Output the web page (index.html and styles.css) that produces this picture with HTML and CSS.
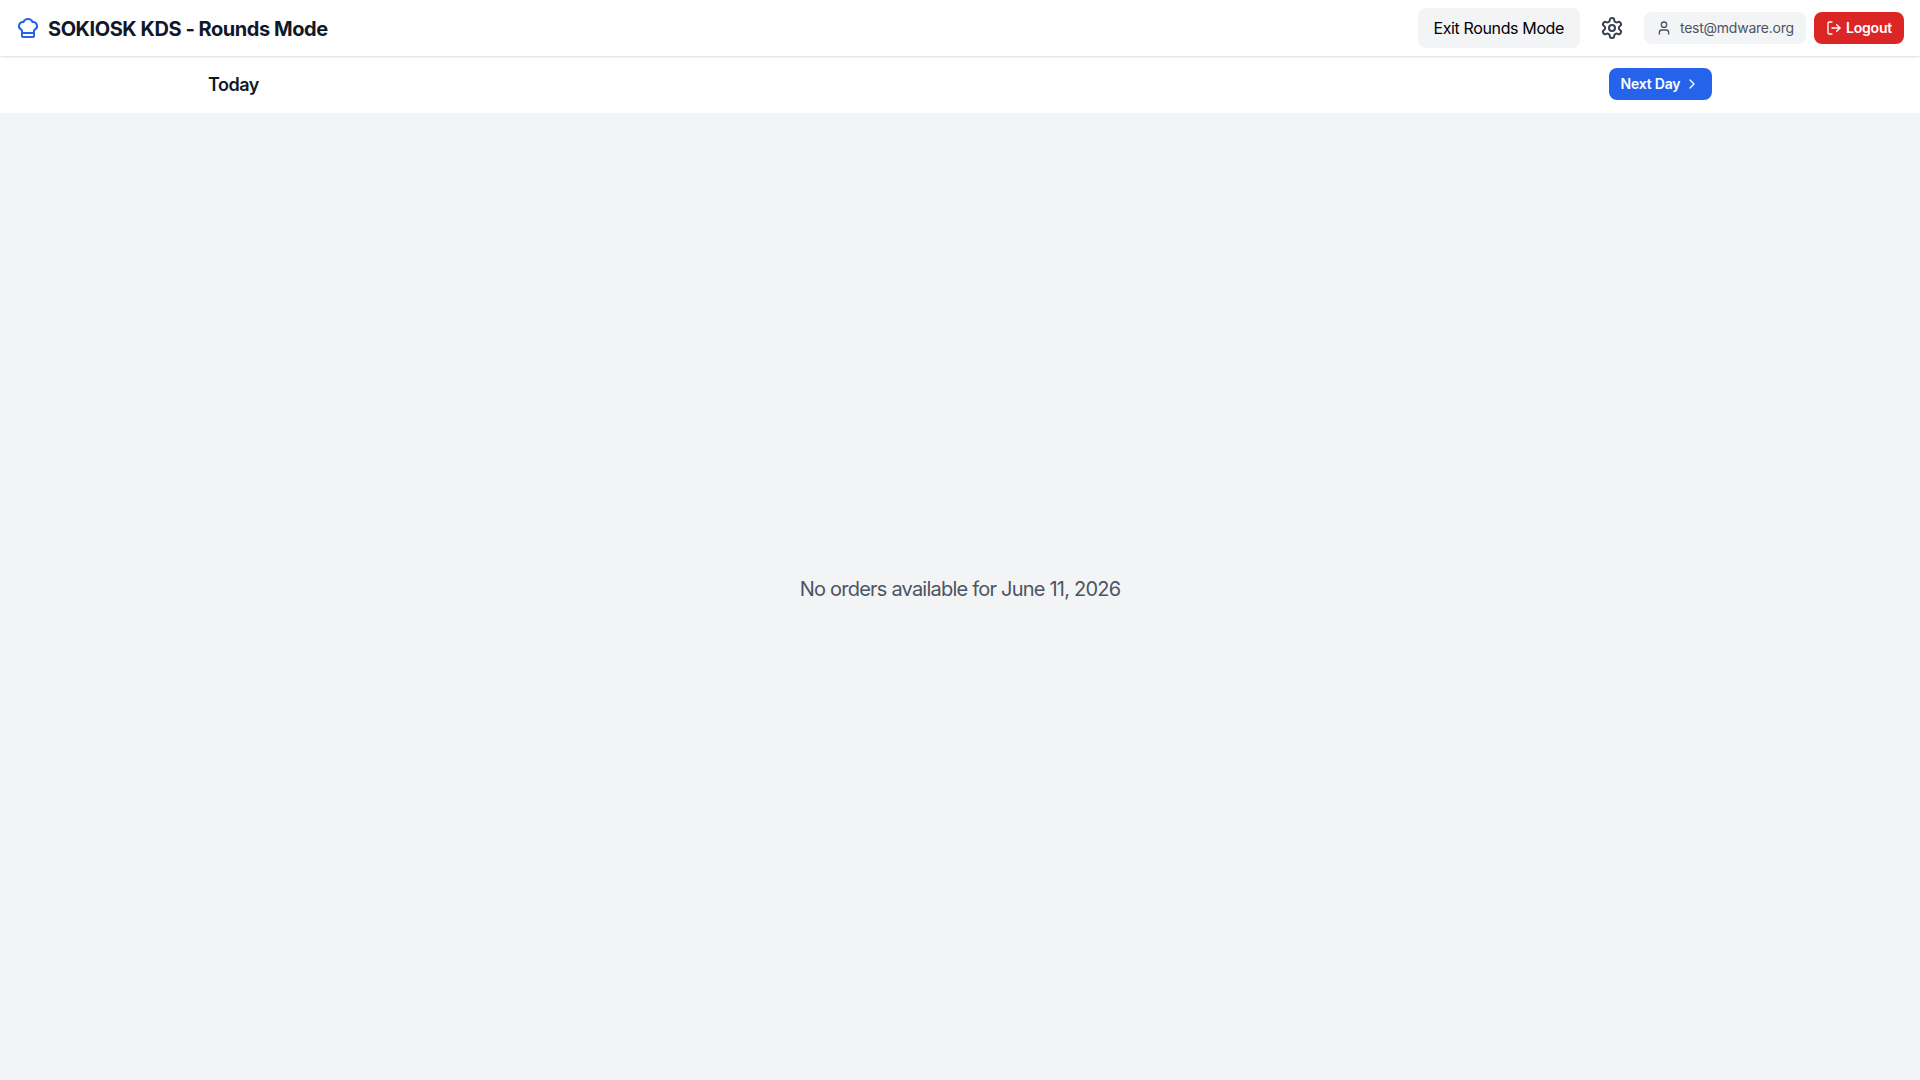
FILE: index.html
```html
<!DOCTYPE html>
<html lang="en">
<head>
  <meta charset="UTF-8">
  <title>SOKIOSK KDS</title>
  <link rel="stylesheet" href="styles.css">
</head>
<body>
  <header class="header">
    <div class="brand">
      <svg class="icon icon-lg" viewBox="0 0 24 24">
        <path d="M17 21a1 1 0 0 0 1-1v-5.35c0-.457.316-.844.727-1.041a4 4 0 0 0-2.134-7.589 5 5 0 0 0-9.186 0 4 4 0 0 0-2.134 7.588c.411.198.727.585.727 1.041V20a1 1 0 0 0 1 1Z"/>
        <path d="M6 17h12"/>
      </svg>
      <h1 class="title">SOKIOSK KDS - Rounds Mode</h1>
    </div>

    <div class="actions">
      <button class="exit-button">Exit Rounds Mode</button>
      <button class="settings-button" aria-label="Settings">
        <svg class="icon icon-lg" viewBox="0 0 24 24">
          <path d="M12.22 2h-.44a2 2 0 0 0-2 2v.18a2 2 0 0 1-1 1.73l-.43.25a2 2 0 0 1-2 0l-.15-.08a2 2 0 0 0-2.73.73l-.22.38a2 2 0 0 0 .73 2.73l.15.1a2 2 0 0 1 1 1.72v.51a2 2 0 0 1-1 1.74l-.15.09a2 2 0 0 0-.73 2.73l.22.38a2 2 0 0 0 2.73.73l.15-.08a2 2 0 0 1 2 0l.43.25a2 2 0 0 1 1 1.73V20a2 2 0 0 0 2 2h.44a2 2 0 0 0 2-2v-.18a2 2 0 0 1 1-1.73l.43-.25a2 2 0 0 1 2 0l.15.08a2 2 0 0 0 2.73-.73l.22-.39a2 2 0 0 0-.73-2.73l-.15-.08a2 2 0 0 1-1-1.74v-.5a2 2 0 0 1 1-1.74l.15-.09a2 2 0 0 0 .73-2.73l-.22-.38a2 2 0 0 0-2.73-.73l-.15.08a2 2 0 0 1-2 0l-.43-.25a2 2 0 0 1-1-1.73V4a2 2 0 0 0-2-2z"/>
          <circle cx="12" cy="12" r="3"/>
        </svg>
      </button>
      <div class="account">
        <div class="user">
          <svg class="icon icon-sm" viewBox="0 0 24 24">
            <path d="M19 21v-2a4 4 0 0 0-4-4H9a4 4 0 0 0-4 4v2"/>
            <circle cx="12" cy="7" r="4"/>
          </svg>
          <span class="email">test@mdware.org</span>
        </div>
        <button class="logout-button">
          <svg class="icon icon-sm" viewBox="0 0 24 24">
            <path d="M9 21H5a2 2 0 0 1-2-2V5a2 2 0 0 1 2-2h4"/>
            <path d="M16 17l5-5-5-5"/>
            <path d="M21 12H9"/>
          </svg>
          <span>Logout</span>
        </button>
      </div>
    </div>
  </header>

  <nav class="day-bar">
    <div class="day-bar-inner">
      <h2 class="day">Today</h2>
      <button class="next-button">
        <span>Next Day</span>
        <svg class="icon icon-sm" viewBox="0 0 24 24">
          <path d="M9 18l6-6-6-6"/>
        </svg>
      </button>
    </div>
  </nav>

  <main class="orders">
    <p class="empty">No orders available for June 11, 2026</p>
  </main>
</body>
</html>
```

FILE: styles.css
```css
* {
  box-sizing: border-box;
}

body {
  display: flex;
  flex-direction: column;
  height: 100vh;
  margin: 0;
  background-color: #f3f4f6;
  font-family: Inter, "Liberation Sans", sans-serif;
  font-size: 16px;
  line-height: 24px;
  white-space: nowrap;
}

h1, h2, p {
  margin: 0;
}

button {
  border: none;
  font-family: inherit;
  cursor: pointer;
}

.icon {
  flex-shrink: 0;
  fill: none;
  stroke: currentColor;
  stroke-width: 2;
  stroke-linecap: round;
  stroke-linejoin: round;
}

.icon-lg {
  width: 24px;
  height: 24px;
}

.icon-sm {
  width: 16px;
  height: 16px;
}

.header {
  position: relative;
  display: flex;
  align-items: center;
  justify-content: space-between;
  height: 56px;
  padding: 0 16px;
  background-color: #fff;
  box-shadow: 0 1px 3px rgba(0, 0, 0, 0.1), 0 1px 2px -1px rgba(0, 0, 0, 0.1);
}

.brand {
  display: flex;
  align-items: center;
  gap: 8px;
  color: #2563eb;
}

.title {
  padding-top: 2px;
  color: #111827;
  font-size: 20px;
  font-weight: 700;
  line-height: 28px;
  letter-spacing: -0.45px;
}

.actions {
  display: flex;
  align-items: center;
  gap: 12px;
}

.exit-button {
  width: 162.5px;
  height: 40px;
  padding: 0;
  border-radius: 8px;
  background-color: #f3f4f6;
  color: #000;
  font-size: 16px;
  letter-spacing: -0.37px;
}

.settings-button {
  display: flex;
  padding: 8px;
  background: none;
  color: #374151;
}

.account {
  display: flex;
  gap: 8px;
}

.user {
  display: flex;
  align-items: center;
  gap: 8px;
  width: 162px;
  height: 32px;
  padding: 0 12px;
  border-radius: 8px;
  background-color: #f3f4f6;
  color: #4b5563;
}

.email {
  font-size: 14px;
  line-height: 20px;
  letter-spacing: -0.25px;
}

.logout-button,
.next-button {
  display: flex;
  align-items: center;
  gap: 4px;
  height: 32px;
  padding: 0 12px;
  border-radius: 8px;
  color: #fff;
  font-size: 14px;
  font-weight: 600;
  letter-spacing: -0.2px;
}

.logout-button span,
.next-button span {
  padding-bottom: 1px;
}

.logout-button {
  width: 90px;
  background-color: #dc2626;
}

.next-button {
  justify-content: space-between;
  width: 103.5px;
  background-color: #2563eb;
}

.day-bar {
  height: 57px;
  background-color: #fff;
}

.day-bar-inner {
  display: flex;
  align-items: center;
  justify-content: space-between;
  max-width: 1536px;
  height: 56px;
  margin: 0 auto;
  padding: 0 16px;
}

.day {
  padding-top: 2px;
  color: #111827;
  font-size: 18px;
  font-weight: 600;
  line-height: 28px;
  letter-spacing: -0.5px;
}

.orders {
  display: flex;
  flex: 1;
  align-items: center;
  justify-content: center;
  padding-bottom: 16px;
}

.empty {
  color: #4b5563;
  font-size: 20px;
  line-height: 28px;
  letter-spacing: -0.78px;
}
```
